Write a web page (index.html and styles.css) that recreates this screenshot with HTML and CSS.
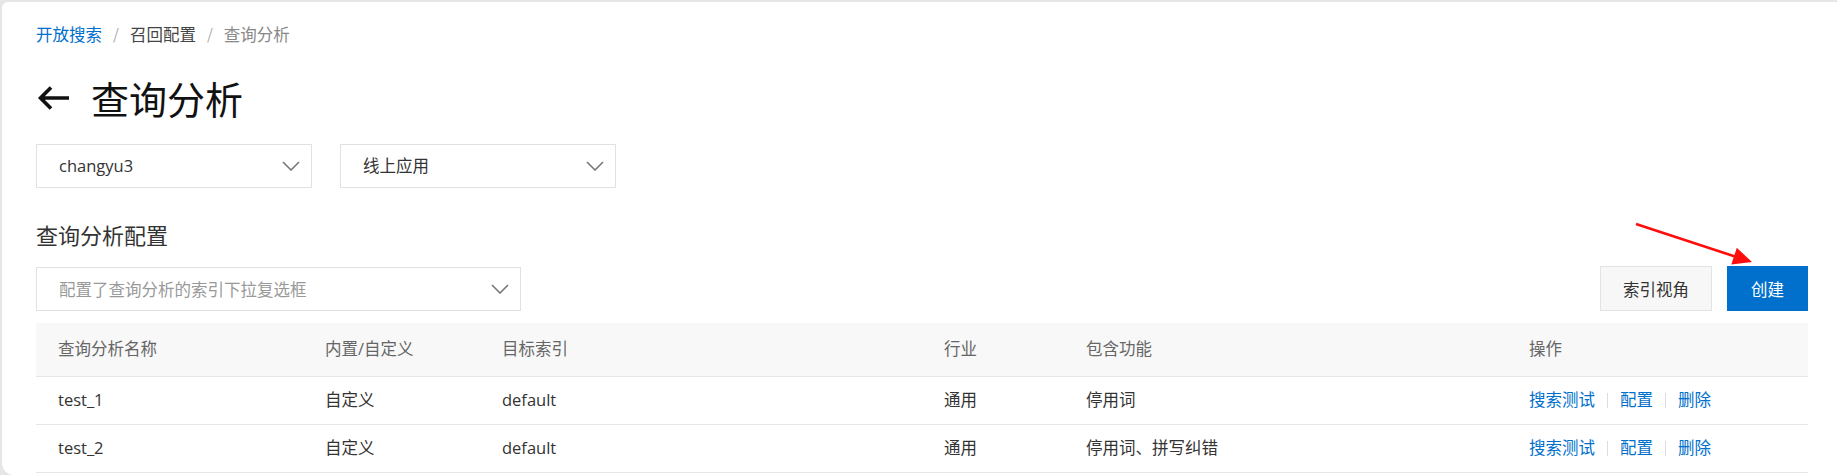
FILE: index.html
```html
<!DOCTYPE html>
<html lang="zh-CN">
<head>
<meta charset="utf-8">
<title>查询分析</title>
<link rel="stylesheet" href="styles.css">
</head>
<body>
<div class="frame">
  <main class="page">
    <nav class="crumbs">
      <a class="crumb-link">开放搜索</a><span class="sep">/</span><span class="crumb-mid">召回配置</span><span class="sep">/</span><span class="crumb-cur">查询分析</span>
    </nav>

    <div class="title-row">
      <svg class="back" width="34" height="26" viewBox="0 0 34 26"><path d="M33 13H4.5M15 2.5L4.5 13 15 23.5" fill="none" stroke="#111" stroke-width="3.6"/></svg>
      <h1 class="title">查询分析</h1>
    </div>

    <div class="filters">
      <div class="select">
        <span class="select-text">changyu3</span>
        <svg class="chev" width="18" height="10" viewBox="0 0 18 10"><path d="M1 1l8 8 8-8" fill="none" stroke="#777" stroke-width="1.6"/></svg>
      </div>
      <div class="select">
        <span class="select-text">线上应用</span>
        <svg class="chev" width="18" height="10" viewBox="0 0 18 10"><path d="M1 1l8 8 8-8" fill="none" stroke="#777" stroke-width="1.6"/></svg>
      </div>
    </div>

    <h2 class="section-title">查询分析配置</h2>

    <div class="toolbar">
      <div class="select select-wide">
        <span class="select-text placeholder">配置了查询分析的索引下拉复选框</span>
        <svg class="chev" width="18" height="10" viewBox="0 0 18 10"><path d="M1 1l8 8 8-8" fill="none" stroke="#777" stroke-width="1.6"/></svg>
      </div>
      <div class="actions">
        <button class="btn">索引视角</button>
        <button class="btn btn-primary">创建</button>
      </div>
    </div>

    <table class="grid">
      <colgroup>
        <col class="c1"><col class="c2"><col class="c3"><col class="c4"><col class="c5"><col class="c6">
      </colgroup>
      <thead>
        <tr><th>查询分析名称</th><th>内置/自定义</th><th>目标索引</th><th>行业</th><th>包含功能</th><th>操作</th></tr>
      </thead>
      <tbody>
        <tr>
          <td>test_1</td><td>自定义</td><td>default</td><td>通用</td><td>停用词</td>
          <td><a class="op">搜索测试</a><span class="op-sep"></span><a class="op">配置</a><span class="op-sep"></span><a class="op">删除</a></td>
        </tr>
        <tr>
          <td>test_2</td><td>自定义</td><td>default</td><td>通用</td><td>停用词、拼写纠错</td>
          <td><a class="op">搜索测试</a><span class="op-sep"></span><a class="op">配置</a><span class="op-sep"></span><a class="op">删除</a></td>
        </tr>
      </tbody>
    </table>
  </main>
</div>

<svg class="annot" width="150" height="70" viewBox="0 0 150 70">
  <line x1="16" y1="14" x2="115" y2="46.5" stroke="#ff0d0d" stroke-width="2.6"/>
  <polygon points="132,52 111.3,54.6 116.8,37.8" fill="#ff0d0d"/>
</svg>
</body>
</html>
```

FILE: styles.css
```css
* { box-sizing: border-box; }

html, body {
  margin: 0;
  padding: 0;
}

body {
  background: #e6e6e6;
  width: 1837px;
  height: 475px;
  overflow: hidden;
  font-family: "Open Sans", "Noto Sans CJK SC", sans-serif;
  font-size: 16.5px;
  color: #333;
}

.frame {
  margin: 2px 0 0 2px;
  height: 473px;
  background: #fff;
  border-top-left-radius: 6px;
  border-bottom-left-radius: 12px;
  overflow: hidden;
}

.page {
  padding: 22px 29px 0 34px;
}

/* breadcrumb */
.crumbs {
  display: flex;
  align-items: center;
  height: 20px;
  line-height: 20px;
  font-family: "Noto Sans CJK SC", sans-serif;
  font-size: 16.5px;
}
.crumb-link { color: #0070cc; }
.crumb-mid { color: #444; }
.crumb-cur { color: #888; }
.sep {
  color: #aaa;
  margin: 0 11px;
  font-size: 15px;
}

/* title */
.title-row {
  display: flex;
  align-items: center;
  margin-top: 32px;
  height: 44px;
}
.back {
  display: block;
  margin-right: 21px;
}
.title {
  margin: 0;
  font-family: "Noto Sans CJK SC", sans-serif;
  font-weight: 400;
  font-size: 38px;
  line-height: 44px;
  color: #111;
}

/* selects */
.filters {
  display: flex;
  gap: 28px;
  margin-top: 24px;
}
.select {
  width: 276px;
  height: 44px;
  border: 1px solid #e1e1e1;
  background: #fff;
  display: flex;
  align-items: center;
  justify-content: space-between;
  padding: 0 11px 0 22px;
}
.select-wide {
  width: 485px;
  height: 44px;
}
.select-text {
  line-height: 20px;
  color: #333;
  font-size: 16.5px;
}
.placeholder { color: #999; font-family: "Noto Sans CJK SC", sans-serif; }
.chev { display: block; }

.section-title {
  margin: 31px 0 0 0;
  font-family: "Noto Sans CJK SC", sans-serif;
  font-weight: 400;
  font-size: 22px;
  line-height: 30px;
  color: #333;
}

/* toolbar */
.toolbar {
  display: flex;
  align-items: center;
  justify-content: space-between;
  margin-top: 17px;
  height: 45px;
}
.actions {
  display: flex;
  gap: 15px;
}
.btn {
  height: 45px;
  padding: 0 22px;
  border: 1px solid #e3e3e3;
  background: #f7f7f7;
  color: #333;
  font-family: "Noto Sans CJK SC", sans-serif;
  font-size: 16.5px;
  line-height: 20px;
  cursor: pointer;
}
.btn-primary {
  background: #0070cc;
  border-color: #0070cc;
  color: #fff;
  padding: 0 23px;
}

/* table */
.grid {
  margin-top: 12px;
  width: 1772px;
  border-collapse: collapse;
  table-layout: fixed;
}
.c1 { width: 267px; }
.c2 { width: 177px; }
.c3 { width: 442px; }
.c4 { width: 142px; }
.c5 { width: 443px; }
.c6 { width: 301px; }

.grid th {
  height: 53px;
  padding: 0 0 0 22px;
  background: #f8f8f8;
  font-weight: 400;
  text-align: left;
  color: #666;
  border-bottom: 1px solid #e6e6e6;
  line-height: 20px;
}
.grid td {
  height: 48px;
  padding: 0 0 0 22px;
  color: #333;
  border-bottom: 1px solid #e6e6e6;
  line-height: 20px;
  white-space: nowrap;
}
.op { color: #0070cc; cursor: pointer; }
.op-sep {
  display: inline-block;
  width: 1px;
  height: 15px;
  background: #dedede;
  margin: 0 12px;
  vertical-align: -2px;
}

/* annotation overlay */
.annot {
  position: absolute;
  left: 1620px;
  top: 210px;
}
```
